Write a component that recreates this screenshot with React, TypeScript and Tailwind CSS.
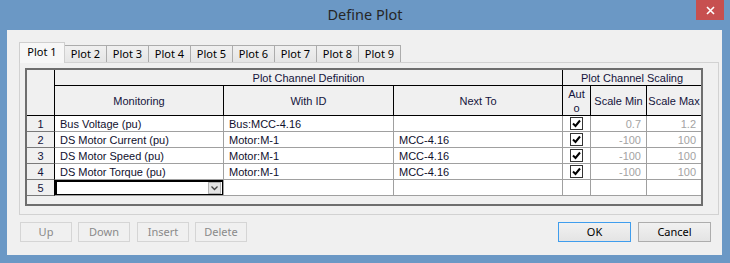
const tabs = ["Plot 1", "Plot 2", "Plot 3", "Plot 4", "Plot 5", "Plot 6", "Plot 7", "Plot 8", "Plot 9"];

const rows = [
  { n: 1, mon: "Bus Voltage (pu)", id: "Bus:MCC-4.16", next: "", min: "0.7", max: "1.2" },
  { n: 2, mon: "DS Motor Current (pu)", id: "Motor:M-1", next: "MCC-4.16", min: "-100", max: "100" },
  { n: 3, mon: "DS Motor Speed (pu)", id: "Motor:M-1", next: "MCC-4.16", min: "-100", max: "100" },
  { n: 4, mon: "DS Motor Torque (pu)", id: "Motor:M-1", next: "MCC-4.16", min: "-100", max: "100" },
];

const ui = "font-['Noto_Sans',sans-serif]";
const head = "flex items-center justify-center border-r border-b border-black bg-[#f0f0f0] text-[#14143c]";
const rowHead = "flex items-center justify-center border-r border-b border-r-black border-b-[#7a7a7a] bg-[#f0f0f0] text-[#14143c]";
const cell = "flex items-center overflow-hidden whitespace-nowrap border-r border-b border-[#a0a0a0] bg-white px-[5px] text-[#10102e]";
const numCell = "flex items-center justify-end overflow-hidden whitespace-nowrap border-r border-b border-[#a0a0a0] bg-white pr-[5px] text-[#a3a3a3]";
const lastCell = "flex items-center justify-end overflow-hidden whitespace-nowrap border-b border-[#a0a0a0] bg-white pr-[5px] text-[#a3a3a3]";

function Check() {
  return (
    <div className="flex h-[13px] w-[13px] items-center justify-center border border-[#333] bg-white">
      <svg width="9" height="9" viewBox="0 0 9 9">
        <path d="M1 4.5 L3.5 7 L8 1.5" fill="none" stroke="#000" strokeWidth="2" />
      </svg>
    </div>
  );
}

export default function App() {
  return (
    <div className="flex h-[263px] w-[730px] flex-col bg-[#6b98c5]">
      <div className="relative flex h-[30px] shrink-0 items-center justify-center">
        <span className={`${ui} text-[14.5px] text-[#262626]`}>Define Plot</span>
        <div className="absolute right-[6px] top-0 flex h-[20px] w-[28px] items-center justify-center bg-[#c75050]">
          <svg width="9" height="9" viewBox="0 0 9 9">
            <path d="M1 1 L8 8 M8 1 L1 8" stroke="#fff" strokeWidth="1.6" />
          </svg>
        </div>
      </div>

      <div className="ml-[7px] flex h-[225px] w-[715px] flex-col bg-[#f0f0f0]">
        <div className="mt-[12px] flex h-[20px] items-end pl-[12px]">
          {tabs.map((t, i) =>
            i === 0 ? (
              <div
                key={t}
                className={`${ui} relative z-10 -mb-px flex h-[21px] w-[46px] items-center justify-center border border-b-0 border-[#cfcfcf] bg-[#f7f7f7] pb-[2px] text-[11px] text-black`}
              >
                {t}
              </div>
            ) : (
              <div
                key={t}
                className={`${ui} -ml-px flex h-[17px] w-[43px] items-center justify-center border border-b-0 border-[#acacac] bg-linear-to-b from-[#f0f0f0] to-[#e5e5e5] text-[11px] text-black`}
              >
                {t}
              </div>
            )
          )}
        </div>

        <div className="ml-[12px] h-[153px] w-[700px] border border-[#d2d2d2] pl-[5px] pt-[5px]">
          <div className="h-[138px] w-[678px] border-2 border-[#6e6e6e] bg-[#f0f0f0] font-['Liberation_Sans',Arial,sans-serif] text-[11px] leading-[14px]">
            <div className="grid grid-cols-[28px_169px_170px_169px_28px_56px_54px] grid-rows-[16px_30px_16px_16px_16px_16px_16px]">
              <div className={`${head} row-span-2`} />
              <div className={`${head} col-span-3`}>Plot Channel Definition</div>
              <div className={`${head} col-span-3 border-r-0`}>Plot Channel Scaling</div>
              <div className={head}>Monitoring</div>
              <div className={head}>With ID</div>
              <div className={head}>Next To</div>
              <div className={`${head} flex-col text-center`}>
                <span>Aut</span>
                <span>o</span>
              </div>
              <div className={`${head} whitespace-nowrap`}>Scale Min</div>
              <div className={`${head} overflow-hidden whitespace-nowrap border-r-0`}>Scale Max</div>

              {rows.map((r) => (
                <div key={r.n} className="contents">
                  <div className={rowHead}>{r.n}</div>
                  <div className={cell}>{r.mon}</div>
                  <div className={cell}>{r.id}</div>
                  <div className={cell}>{r.next}</div>
                  <div className={`${cell} justify-center px-0`}>
                    <Check />
                  </div>
                  <div className={numCell}>{r.min}</div>
                  <div className={lastCell}>{r.max}</div>
                </div>
              ))}

              <div className={rowHead}>5</div>
              <div className="flex border-r border-b border-[#a0a0a0] bg-white">
                <div className="flex flex-1 items-center justify-end border-t-2 border-l-2 border-r border-b border-black bg-white pr-px">
                  <div className="flex h-[12px] w-[13px] items-center justify-center border border-[#b4b4b4] bg-[#e4e4e4]">
                    <svg width="7" height="5" viewBox="0 0 7 5">
                      <path d="M0.5 0.5 L3.5 3.5 L6.5 0.5" fill="none" stroke="#444" strokeWidth="1.3" />
                    </svg>
                  </div>
                </div>
              </div>
              <div className={cell} />
              <div className={cell} />
              <div className={cell} />
              <div className={numCell} />
              <div className={lastCell} />
            </div>
          </div>
        </div>

        <div className={`${ui} mt-[7px] flex items-center justify-between pl-[13px] pr-[11px] text-[11px]`}>
          <div className="flex">
            <div className="flex h-[20px] w-[52px] items-center justify-center border border-[#d5d5d5] text-[#8a8a8a]">Up</div>
            <div className="ml-[6px] flex h-[20px] w-[52px] items-center justify-center border border-[#d5d5d5] text-[#8a8a8a]">Down</div>
            <div className="ml-[7px] flex h-[20px] w-[52px] items-center justify-center border border-[#d5d5d5] text-[#8a8a8a]">Insert</div>
            <div className="ml-[6px] flex h-[20px] w-[52px] items-center justify-center border border-[#d5d5d5] text-[#8a8a8a]">Delete</div>
          </div>
          <div className="flex gap-[7px]">
            <div className="flex h-[20px] w-[73px] items-center justify-center border border-[#3f9ded] bg-linear-to-b from-[#f1f1f1] to-[#e4e4e4] text-black">OK</div>
            <div className="flex h-[20px] w-[73px] items-center justify-center border border-[#adadad] bg-linear-to-b from-[#f1f1f1] to-[#e4e4e4] text-black">Cancel</div>
          </div>
        </div>
      </div>
    </div>
  );
}
